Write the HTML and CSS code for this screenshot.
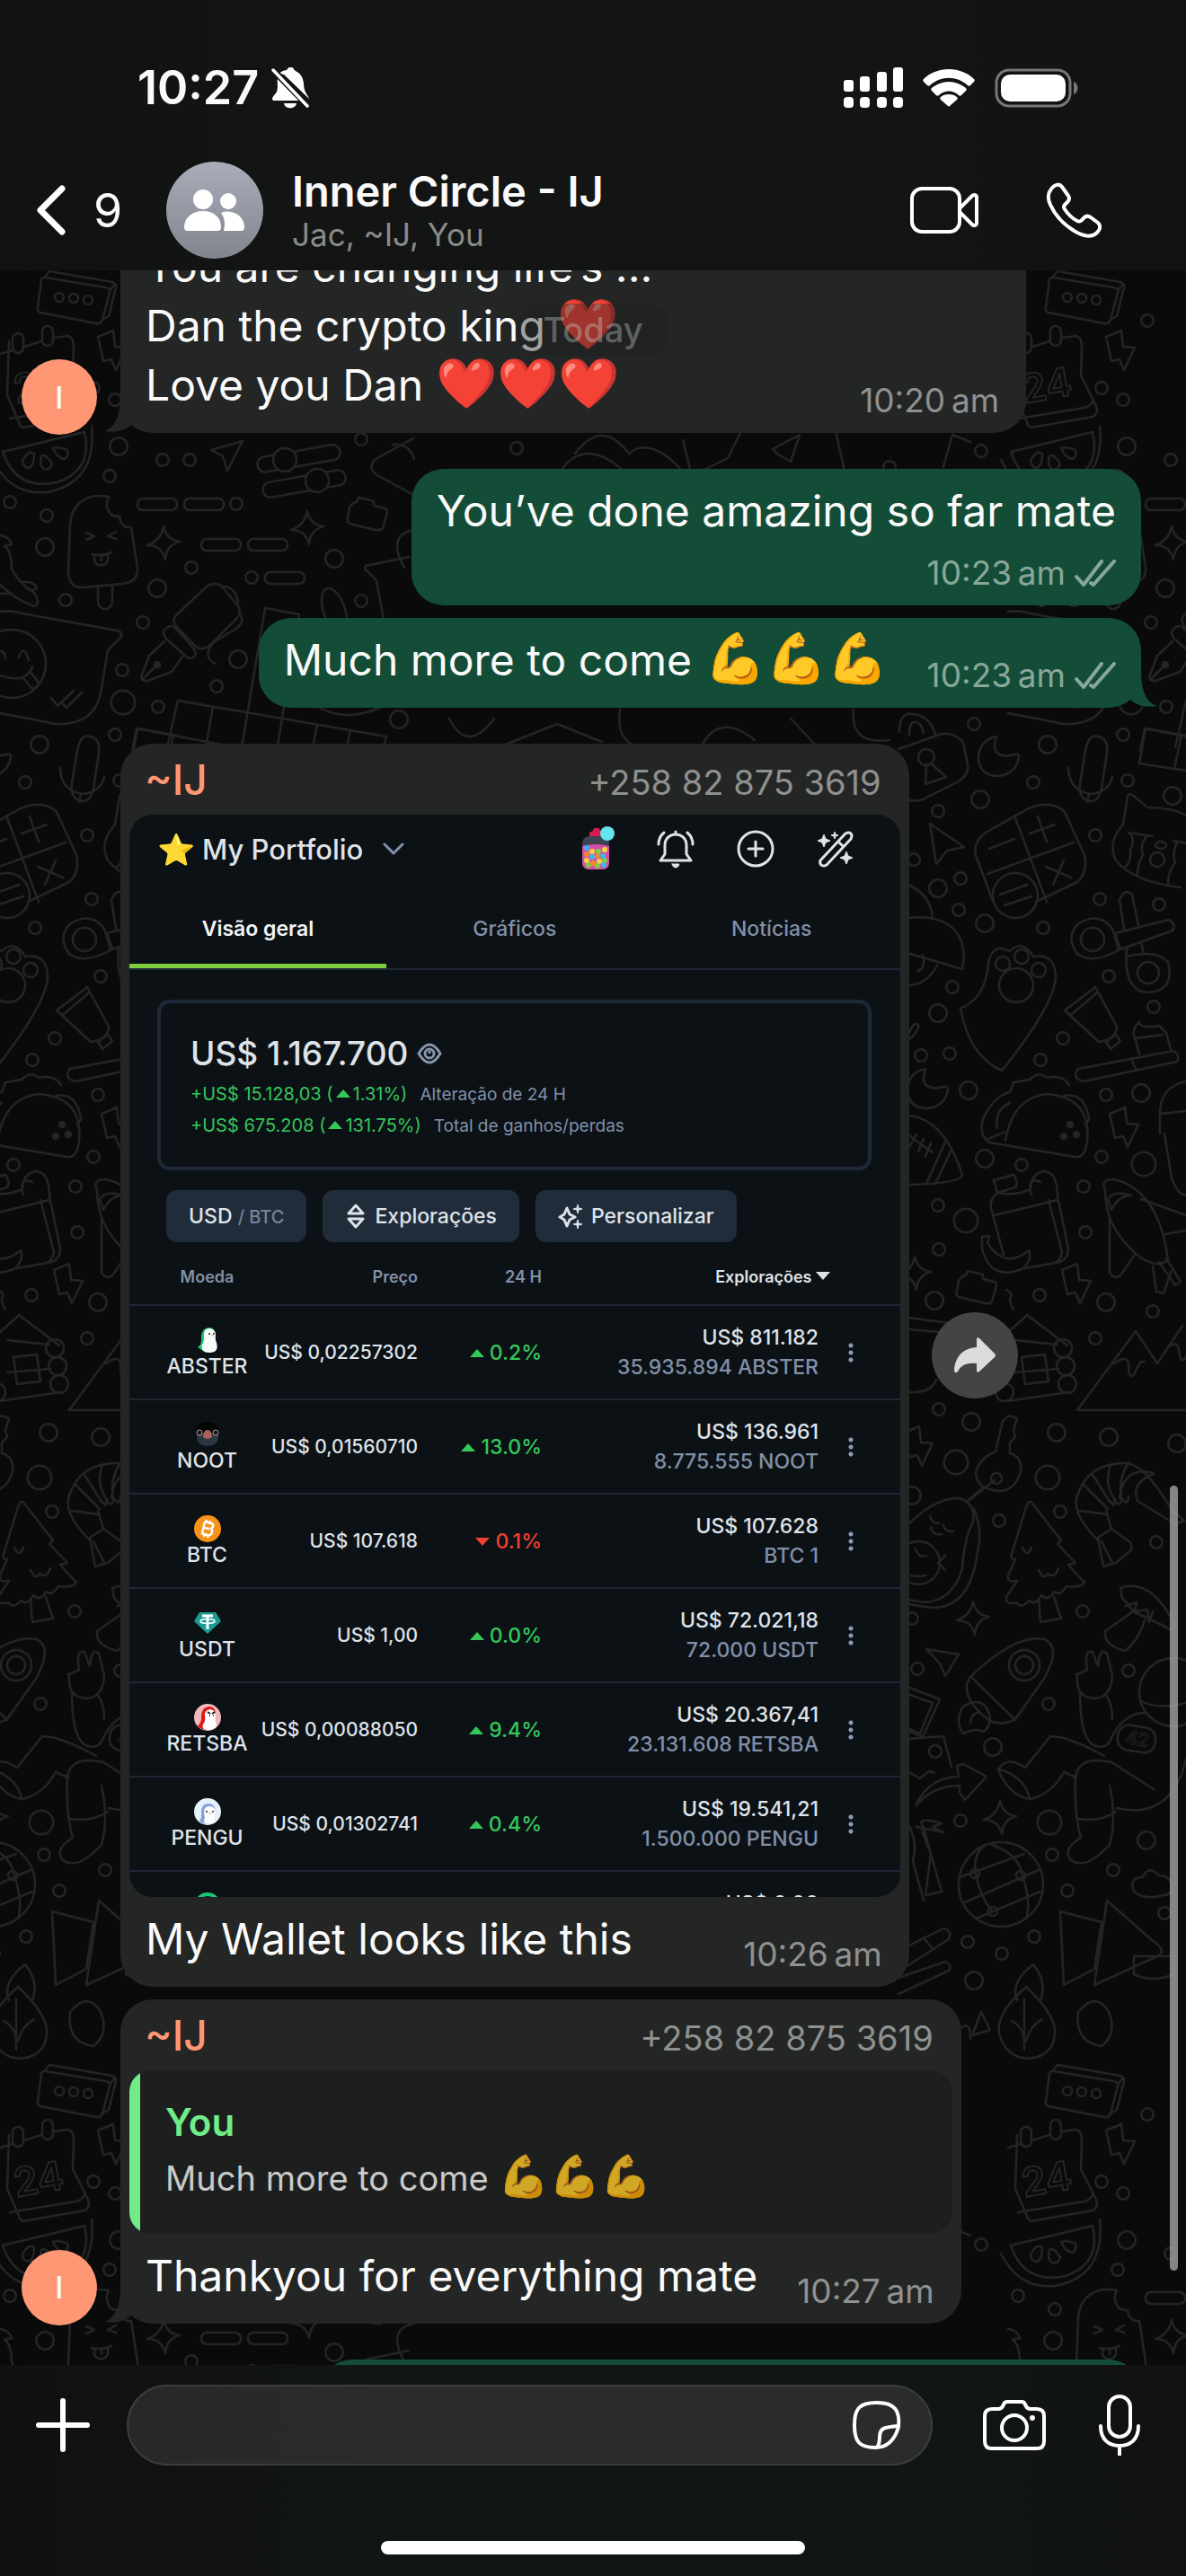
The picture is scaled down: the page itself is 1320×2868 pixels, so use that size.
FILE: index.html
```html
<!doctype html>
<html lang="en">
  <head>
    <meta charset="UTF-8" />
    <meta name="viewport" content="width=device-width, initial-scale=1.0" />
    <title>Inner Circle - IJ</title>
    <link rel="stylesheet" href="styles.css">
  </head>
  <body>
    <header class="top">
      <div class="status">
        <span class="clock">10:27</span>
        <svg class="mute" width="42" height="46" viewBox="0 0 42 46" fill="#fff">
          <path d="M9 7C13 2 17 4 18 2c1-3 6-3 7 0 1 3 10 3 11 16 0 10 5 13 6 17L14 8zM7 12l27 25H2c-3-3 2-6 4-10 2-5 0-10 1-15zM14 40h14c-1 7-13 7-14 0z" />
          <path d="M2 3l38 39" stroke="#131514" stroke-width="7" />
          <path d="M2 3l38 40" stroke="#fff" stroke-width="3.5" stroke-linecap="round" />
        </svg>
        <div class="status-right">
          <svg width="66" height="46" viewBox="0 0 66 46" fill="#fff">
            <rect x="0" y="14" width="11" height="13" rx="3" />
            <rect x="18" y="10" width="11" height="17" rx="3" />
            <rect x="37" y="5" width="11" height="22" rx="3" />
            <rect x="55" y="0" width="11" height="27" rx="3" />
            <rect x="0" y="33" width="11" height="12" rx="4" />
            <rect x="18" y="33" width="11" height="12" rx="4" />
            <rect x="37" y="33" width="11" height="12" rx="4" />
            <rect x="55" y="33" width="11" height="12" rx="4" />
          </svg>
          <svg width="58" height="42" viewBox="0 0 58 42" fill="#fff">
            <path d="M29 0c11 0 21 4 28 11 1 1 1 2 0 3l-4 4c-1 1-2 1-3 0-12-11-30-11-42 0-1 1-2 1-3 0l-4-4c-1-1-1-2 0-3C8 4 18 0 29 0z" />
            <path d="M29 14c7 0 14 3 19 7 1 1 1 2 0 3l-5 5c-1 1-2 1-3 0-6-6-16-6-22 0-1 1-2 1-3 0l-5-5c-1-1-1-2 0-3 5-4 12-7 19-7z" />
            <path d="M29 28c4 0 7 1 9 3 1 1 1 2 0 3l-8 7q-1 1-2 0l-8-7c-1-1-1-2 0-3 2-2 5-3 9-3z" />
          </svg>
          <svg width="93" height="44" viewBox="0 0 93 44">
            <rect x="2" y="2" width="82" height="40" rx="14" fill="none" stroke="#767776" stroke-width="3" />
            <rect x="7" y="7" width="72" height="30" rx="10" fill="#fff" />
            <path d="M88 15c6 2 6 12 0 14z" fill="#767776" />
          </svg>
        </div>
      </div>

      <nav class="bar">
        <a class="back" href="#chats" aria-label="Back, 9 unread">
          <svg width="34" height="58" viewBox="0 0 34 58" fill="none" stroke="#fff" stroke-width="7" stroke-linecap="round" stroke-linejoin="round">
            <path d="M29 5L5 29l24 24" />
          </svg>
          <span>9</span>
        </a>
        <span class="group-pic">
          <svg width="68" height="48" viewBox="0 0 68 48" fill="#fff">
            <circle cx="21" cy="12" r="11" />
            <circle cx="49" cy="14" r="9" />
            <path d="M0 43c0-11 9-18 21-18s20 7 20 18c0 2-1 4-3 4H3c-2 0-3-2-3-4z" />
            <path d="M41 27c12-5 26 3 26 16 0 2-1 4-3 4H44c2-8 1-15-3-20z" />
          </svg>
        </span>
        <div class="group">
          <h1>Inner Circle - IJ</h1>
          <p>Jac, ~IJ, You</p>
        </div>
        <button class="icon" aria-label="Video call">
          <svg width="78" height="54" viewBox="0 0 78 54" fill="none" stroke="#fff" stroke-width="4" stroke-linejoin="round">
            <rect x="3" y="3" width="53" height="48" rx="11" />
            <path d="M56 25l14-14c2-2 5-1 5 2v28c0 3-3 4-5 2L56 29z" />
          </svg>
        </button>
        <button class="icon" aria-label="Voice call">
          <svg width="62" height="62" viewBox="0 0 62 62" fill="none" stroke="#fff" stroke-width="4" stroke-linejoin="round">
            <path d="M5 9c4-7 10-8 13-4l7 10c2 3 1 5-1 7l-3 3c-2 2-1 3 0 5 4 6 8 10 14 13 2 1 3 1 5-1l3-3c2-2 4-2 7 0l8 6c3 3 3 7-1 11-6 6-14 4-22 0C22 49 11 38 5 25c-3-7-3-12 0-16z" />
          </svg>
        </button>
      </nav>
    </header>

    <main class="chat">
      <svg class="wallpaper" width="100%" height="100%" aria-hidden="true">
        <defs>
          <path id="spark" d="M0-19q3 15 18 17-15 4-16 20-4-16-20-16 15-5 18-21z" />
          <path id="bolt" d="M0 0l17-7 2 18 13 1-12 25-5-12-9 2z" />
          <path id="moon" d="M0 0q-20 4-20 25 2 19 22 19 20-2 23-21 0-5-5-3-18 5-22-7 0-8 2-13z" />
          <path id="brick" d="M-15-12q2-5 8-6l2-5 17 4 0 5 12 3q5 2 2 8l-4 14q-2 3-8 2l-29-7q-4-2-2-7z" />
          <path id="dots-s" d="M1084 806h0M1150 871h0M1250 818h0M1255 869h0M1044 903h0M1219 930h0M1017 957h0M1069 978h0M1067 1013h0M1224 1001h0M1290 1007h0M1161 1033h0M1234 1087h0M1060 1099h0M1284 1121h0M1183 1156h0M1158 1180h0M1025 1175h0M1057 1173h0M1231 1219h0M1226 1288h0M1137 1297h0M1206 1321h0M1044 1342h0M1208 1372h0M1045 1391h0M1157 1442h0M1283 1460h0M1219 1490h0M1045 1569h0M1112 1693h0M1180 1683h0M1287 1717h0M1205 1794h0M1015 1802h0M1021 1858h0M1256 1860h0M1167 1897h0M1069 2027h0M1171 2065h0M1239 2082h0M1188 2105h0M1296 2130h0M1077 2162h0M1115 2175h0M1151 2156h0M122 530h0M11 559h0M52 574h0M181 512h0M211 512h0M263 561h0M213 632h0M280 643h0M73 668h0M159 693h0M136 746h0M241 764h0M176 787h0M402 489h0M402 669h0M128 445h0M155 357h0M104 432h0M575 499h0M1092 502h0M990 520h0" />
          <path id="dots-m" d="M1166 829h0M1091 890h0M1305 886h0M1044 989h0M1096 1028h0M1044 1128h0M1078 1214h0M1270 1217h0M1096 1290h0M1040 1448h0M1231 1450h0M1081 1583h0M1176 1595h0M1234 1600h0M1015 1665h0M1310 1607h0M1105 1945h0M1276 2049h0M1084 2205h0M132 497h0M50 609h0M175 655h0M372 622h0M265 734h0M444 801h0" />
          <path id="dots-l" d="M1273 1296h0M1075 1359h0M1064 1628h0M1166 1645h0M1168 2029h0M137 782h0" />
          <g id="doodles" fill="none" stroke="#232424" stroke-width="2.5" stroke-linecap="round" stroke-linejoin="round">
            <!-- bubbles: a wide grey dot with a narrower dark dot on top -->
            <use href="#dots-s" stroke-width="16" />
            <use href="#dots-s" stroke="#0a0a0a" stroke-width="11" />
            <use href="#dots-m" stroke-width="22" />
            <use href="#dots-m" stroke="#0a0a0a" stroke-width="17" />
            <use href="#dots-l" stroke-width="29" />
            <use href="#dots-l" stroke="#0a0a0a" stroke-width="24" />
            <use href="#spark" x="182" y="605" />
            <use href="#spark" x="342" y="588" />
            <use href="#spark" x="1018" y="1418" />
            <use href="#spark" x="1083" y="1802" />
            <use href="#spark" x="1113" y="2024" />
            <use href="#bolt" x="109" y="375" />
            <use href="#bolt" x="1235" y="1240" />
            <use href="#bolt" x="1182" y="1414" />
            <use href="#bolt" x="1006" y="1595" />
            <use href="#moon" x="1109" y="820" />
            <use href="#moon" x="1030" y="1190" />
            <use href="#brick" x="404" y="577" />
            <use href="#brick" x="1082" y="1438" />
            <!-- dice card, calendar, watermelon -->
            <path d="M46 312q1-4 5-3l66 11q6 1 5 6l-8 30q-2 5-7 4l-62-12q-4-1-3-6zM50 308l5-6 70 12q5 2 4 6l-8 32-6 3M122 324l6-8" />
            <circle cx="66" cy="331" r="5" /><circle cx="82" cy="332" r="5" /><circle cx="98" cy="334" r="5" />
            <path d="M0 394l14-4M27 386l19-6M61 376l15-2q6 2 6 12l-1 32 17 34q3 8-4 12l-68 12q-4-1-5-6L8 440l2-60M11 466l74-12q8-2 10-10" />
            <text class="scribble" x="14" y="444" transform="rotate(-10 46 424)">24</text>
            <rect x="14" y="371" width="12" height="22" rx="6" /><rect x="47" y="363" width="12" height="22" rx="6" />
            <path d="M3 503l91-22q10 42-30 56-46 10-61-34zM-8 512q20 40 60 36 56-10 50-74M25 513q6-12 13-8 0 14-6 16-7-1-7-8zM46 508q4-4 12 8-2 8-9 6-6-4-3-14zM59 499q8-2 16 2 2 8-4 10-8-2-12-12z" />
            <!-- paper planes and sliders -->
            <path d="M235 501l35-10-17 33-5-16zM1035 917l38 26-19 4-12 15zM1031 1836l36 6-15 24-6-14z" />
            <rect x="286" y="502" width="93" height="17" rx="8" transform="rotate(-10 332 510)" />
            <rect x="292" y="530" width="93" height="17" rx="8" transform="rotate(-10 339 538)" />
            <circle cx="317" cy="512" r="13" fill="#0a0a0a" /><circle cx="353" cy="535" r="13" fill="#0a0a0a" />
            <rect x="153" y="555" width="44" height="13" rx="6" /><rect x="205" y="555" width="44" height="13" rx="6" />
            <rect x="224" y="600" width="44" height="13" rx="6" /><rect x="276" y="600" width="44" height="13" rx="6" />
            <rect x="295" y="637" width="44" height="13" rx="6" />
            <!-- ice lolly -->
            <path d="M121 553c-25-5-42 8-43 32l-2 50c0 14 6 20 18 19l42-4c12-1 18-8 17-18l-7-45c-8 1-12-4-13-12-13 1-17-12-12-22zM109 652v18a8 8 0 0 0 16 0v-19M96 593l9 4-9 4M129 592l-9 5 9 3M102 617q11 3 22-2M105 618v6a8 8 0 0 0 15 0v-6M113 619v5" />
            <path d="M0 596q10 1 13 10l-8 2q8 6 8 25 6 14 26 28 6 12-1 14-22-8-38-24M24 648q14-2 17 7-7 5-12-1M0 661h10" />
            <!-- smiley message -->
            <path d="M0 681q12-2 25 2l105 19q8 2 4 8l-14 14-8 48q-8 36-50 34L0 794M57 777l7 9 18-17M70 784l4 4 17-17M0 725q6 0 6 8M21 732q5-16 11 3M0 752q30 10 36-10M26 755l10 12q8-2 6-8l-8-11" />
            <circle cx="13" cy="739" r="38" />
            <path d="M81 866l5-30q4-20 14-16 12 2 10 18l-6 40q-4 16-14 14-14-4-9-26zM67 854q0 26 25 30 20-2 24-19M90 884l-2 9" />
            <!-- fountain pen -->
            <path d="M196 685l34-32q8-6 16-1l18 21q6 8-1 16l-30 30q-8 6-15 1l-22-23q-5-6 0-12zM187 698q-8 4-3 12l22 20q6 6 11 0 2-4-3-10l-20-22q-4-2-7 0zM183 714l-17 16-9 24q0 4 7 4l27-10 12-17M158 757l16-16M247 653q16 0 18 18M268 685q4 8-4 14l-26 16q-14 16 2 24" />
            <circle cx="175" cy="740" r="3" fill="#232424" />
            <ellipse cx="372" cy="680" rx="12" ry="26" transform="rotate(-18 372 680)" />
            <path d="M455 620l-48 10q-2 4 2 6l10 10 8 44M460 590q-30 6-10 42M460 488l-40 22q-12 8-2 18l44 24M437 495q18-2 24 16M356 788q30 16 66 0" />
            <!-- crossword -->
            <path d="M295 677l38 7M295 677l-26 155M333 684l-24 146M198 780l232 40-3 12M198 780l-12 52M237 787l-8 45M152 811l105 20M152 811l-5 25M353 807l-5 25M390 813l-4 20" />
            <path d="M620 530q30-50 80 0M640 505q30-40 60 0 24-20 60 20M760 490l10 40 40-20 20-40M860 500l30-16-10 30-14-8zM930 480l10 44M1050 520l10-36 20 8M500 800q20 40 50 0M560 830l60-24 50 20M690 790q-6 40 30 44M780 832q20-40 60-8M880 800l30 32M950 790q-4 40 40 34" />
            <!-- padlock -->
            <path d="M1000 834l48-17q15-2 24 10l5 24q2 12-12 20l-38 19q-14 4-27-2M1001 815q0-22 14-20 18 0 26 22M1012 818q0-16 8-14 6 2 8 12M1031 851l-1 22 23-8-17-15" />
            <circle cx="1031" cy="843" r="9" />
            <!-- calculator tile -->
            <path d="M1105 1003l-18-48q-6-16 10-28l48-27q26-10 40 4l22 48q4 20-8 30l-46 22M1129 908l36 96M1099 973l96-35M1101 945l28-11M1146 928l28-10M1155 909l10 28M1164 965l28 12M1184 958l-12 27M1113 996l30-11M1118 1008l30-10" />
            <circle cx="1130" cy="997" r="25" />
            <!-- striped cat -->
            <path d="M1250 918l5-32q2-4 8 1l14 12q30 0 45 10M1250 918q-18 20-8 40 20 24 72 30M1256 927l27 4M1258 928q6 10 0 18 2 12-6 20M1276 932q-8 8-4 20-6 10-6 22M1306 936l20 4M1310 938q-6 12-2 22-8 10-8 24M1275 811l45 8M1268 850l52 8M1275 811l-7 39M1315 818l-8 38" />
            <circle cx="1288" cy="957" r="8" /><ellipse cx="1292" cy="941" rx="6" ry="4" />
            <!-- paw, scissors, toothpaste -->
            <path d="M1069 1123q28-12 31-50 4-24 24-14 14-14 26 6 26-4 25 26-6 34-60 101-36-16-46-69z" />
            <circle cx="1116" cy="1073" r="8" /><circle cx="1137" cy="1065" r="8" /><circle cx="1156" cy="1080" r="8" /><circle cx="1131" cy="1097" r="19" />
            <circle cx="1216" cy="1046" r="13" /><circle cx="1278" cy="1083" r="12" />
            <path d="M1245 1058q-30 16-46 4-14-20 2-34 24-14 38 8zM1241 1039l60-15q8 4 4 12l-58 21zM1251 1034l-5-32q6-14 14-6l7 34M1254 1056q-4 48 24 49 30-2 22-34-14-14-46-6zM1270 1049l3 13M1185 1125l34-26 24 44q0 14-20 17zM1192 1130l29-25M1231 1160l11-8 5 7-11 9zM1200 1190l106-20q8 4 4 12l-104 22q-14-4-6-14zM1260 1181l4 9M1268 1174l-4-16q-6-12 4-20 2 8 22 4l8 8 5 18M1264 1156l30-4" />
            <!-- clam, football, taco -->
            <path d="M1010 985q26 10 28 38M1010 1022q60-6 63 43l-2 14-61-18M1043 1075q-12 22-33 22M1021 1081q10-2 6-18M1010 1157q6-22 12-16 2 6-12 18" />
            <path d="M1010 1242q40 2 61 66-2 10-61 11M1031 1318l22-49M1041 1318l18-38M1010 1263l28 20M1020 1263l-8 14M1028 1268l-6 14M1036 1273l-6 14" />
            <path d="M1119 1270q8-48 46-52 50 4 45 52-2 20-14 18l-95-16q-12-8-7-26 12-26 30-30l4-11q12-2 18-3 10-10 20-2 16-4 24 8M1184 1220q24-4 28 26l-4 6M1110 1256q-4-20 14-28M1100 1268q10-4 18-8" />
            <circle cx="1191" cy="1252" r="3" fill="#232424" /><circle cx="1198" cy="1263" r="3" fill="#232424" /><circle cx="1184" cy="1265" r="3" fill="#232424" />
            <!-- backpack and banana -->
            <path d="M1117 1397l-14-52q-2-10 8-17 18 4 36-4 0-18 16-20 14 2 14 28l12 58q0 14-14 16l-34 6M1107 1353l70-17M1167 1336l15 58q-2 10-8 12M1106 1314l22-6q6 8 2 14l-20 6zM1148 1330q-6-20 10-14M1093 1377l8-1-2 8q20 30 46 8 4 10-6 20-36 16-46-22z" />
            <!-- shuttle -->
            <path d="M1230 1325q-6-12 10-12 50 12 60 90-20 14-50-22-20-24-20-56zM1233 1335q6-10 26-4-14 0-22 16zM1235 1355v62q6 8 12 3l16-23M1270 1335l50 18M1297 1374l23-4M1283 1410l4 28 8 2 8-24M1290 1405l18 26 6-4-16-26M1291 1240l29-3M1291 1262v-22q0-30 29-36M1296 1262l8 50q8 20 16 18M1120 1436q8 4 4 10 0 6 4 12" />
            <!-- cabin and mountains -->
            <path d="M1010 1467l62 8M1010 1480l60 5M1010 1550q26 2 32-14M1117 1488l26-24 45 34M1137 1511l26-3 4 30-26 3zM1130 1492l46 5M1130 1528l48-4M1120 1560l70-10M1199 1570l65-88 24 36 28-42M1199 1570h121M1240 1518q14-10 16 0 0 20 6 12 6-12 8-14l4 0M1300 1500q10-8 12 2 2 20 8 8" />
            <circle cx="1183" cy="1501" r="10" /><circle cx="1186" cy="1521" r="10" /><circle cx="1188" cy="1541" r="10" /><circle cx="1118" cy="1550" r="10" />
            <!-- key and avocado -->
            <path d="M1108 1616l8-34q8-10 16-2l-4 12 2 8-6 6 0 12q14 4 12 20-6 22-24 22-26-2-26-22 6-16 22-22zM1107 1648l-28 22M1094 1656l-18 16" />
            <circle cx="1109" cy="1646" r="6" />
            <path d="M1010 1698q30-30 56-30 20 4 17 26-10 20-12 52-10 36-42 38l-19-3M1084 1680q10 24 4 48-8 62-50 62l-28-4M1035 1688q2 8 10 8M1036 1700q2 10 12 8M1050 1698q2 8 11 7M1052 1732l-8 8 8 8M1019 1724q4 12 12 8M1014 1754q8 2 16 0" />
            <circle cx="1022" cy="1740" r="24" />
            <!-- tree -->
            <path d="M1149 1674l32 41-4 4 20 21-8 2 18 20q-4 6-20 4-8 12-14 6-6 12-14 4-6 12-14 6-8 10-14 2-12 4-11-6l12-18q-12 2-10-6l8-18q-6 0-4-6l16-52q4-10 7-4zM1156 1780l2 26 23-4-8-24M1138 1723q6 12 10 0M1156 1748q6 12 10 4 8 6 12-6" />
            <!-- shrimp and mushroom -->
            <path d="M1222 1715q-30-30-23-50 12-36 53-36 22 0 52 52l14 12-10 4-42-26q-8-20 18-30M1222 1712l15-10-6-20M1202 1682l30 4M1205 1652l28 28M1215 1640l20 32M1236 1631q-8 22 6 40M1256 1628q-12 20-8 40M1284 1640q-34-8-38 28M1222 1712l6 32 14-4 17-14 0-8-22-16M1226 1716l12 24M1236 1672q6 8 4-2 8 10 8-2 8 10 8-2" />
            <path d="M1247 1768q34-12 60 40-4 10-10 3l-34-16-14-16zM1264 1792l-34 24q-2 16 22 22 14-10 22-34M1253 1788l12-4-2 10 14-2 2 14 4-12" />
            <!-- rocket -->
            <path d="M1080 1867q50-48 82-42 20 8 0 44l-32 45q-14 8-28 2-28-20-26-41zM1082 1868l48 47M1072 1930q-10-14 0-30 24-14 30 12-2 20-14 14-8 0-16 4zM1080 1918q0-10 10-12" />
            <circle cx="1140" cy="1854" r="17" /><circle cx="1140" cy="1854" r="10" />
            <!-- astronaut -->
            <circle cx="1306" cy="1884" r="38" />
            <path d="M1202 1885q0 70 30 58l4-6q14-30 38-30M1270 1894q20 10 50 2M1199 1865q-2 26 20 26 18-2 19-26l-6-24q-8-8-10 14l-6-16q-10-2-6 20l-8 4q-6 0-3 2zM1230 1886q8 10 8 28M1229 1955q-40-22-60-22l-28 35q-20-14-30 2 12 30 36 33 24-6 37-30l14 6M1146 2002q-6-24-34-32M1197 1978q4-24 40-16l47 30M1197 1978q-2 40 6 68-20 12-12 24 16 14 44-16 8-30 0-66M1200 2025q24 4 42-8M1243 2013q60 14 77-54" />
            <rect x="1244" y="1922" width="42" height="28" rx="12" transform="rotate(10 1265 1936)" />
            <text class="scribble tiny" x="1253" y="1943" transform="rotate(10 1265 1936)">42</text>
            <!-- forward arrow, bamboo, photo -->
            <path d="M1020 2008q16-30 47-30l-2-12 7-2 26 14-24 26-6-8v-8q-30 0-48 22zM1010 1878l36 14-19 42-17-8M1010 1886l28 10-14 34-14-6M1010 1936l40-3 9 34M1010 1972l14 8 10-8 6 2M1010 2030q12 20 6 42l12 44M1026 2038l10 26-6 46 18-4-12-42-8-30q-10-12 20-4l-10 4 12 6-30-6" />
            <circle cx="1041" cy="1950" r="7" />
            <!-- globe -->
            <circle cx="1114" cy="2098" r="47" />
            <path d="M1068 2090l72-26M1074 2118l82-36M1086 2136l72-30M1086 2086q-4-20 10-32M1086 2086q4 24 18 42M1104 2054q30 10 34 34 10 30 4 48" />
            <circle cx="1085" cy="2086" r="5" /><circle cx="1136" cy="2088" r="5" /><circle cx="1105" cy="2128" r="5" />
            <!-- books, cake, cloud, flame -->
            <path d="M1180 2128l46 12-8 52-34 18-4-82M1232 2116l50 44q18 12 6 18l-70 32 14-94M1262 2178h44v20q-22 10-44 0zM1262 2106q-6-16 10-16 6-14 18-2 14 0 14 14 0 8-10 8-20 6-32-4zM1150 2187q16 20 8 40M1150 2187q-26 20-18 40M1000 2172l50-25q10 2 6 12l-56 36M1000 2202l52-18q8 4 4 10l-56 26M1030 2160l8 10" />
            <!-- pear and leaves -->
            <path d="M1142 2212q-34 30-30 52 8 28 34 28 30-4 28-34-4-20-32-46zM1140 2226v56M1126 2250q12 6 14 20M1160 2248q-14 8-18 24M1200 2240q20-24 34 0 10 24-8 38-30-4-26-38zM1092 2240l10 20-20 6zM1060 2270q20-30 20 0" />
          </g>
          <pattern id="tile" width="1122" height="1997" patternUnits="userSpaceOnUse">
            <g transform="translate(0 -301)">
              <use href="#doodles" />
              <use href="#doodles" x="-1122" />
              <use href="#doodles" x="1122" />
            </g>
          </pattern>
        </defs>
        <rect width="100%" height="100%" fill="url(#tile)" />
      </svg>

      <div class="messages">
        <div class="row tight-end">
          <span class="avatar">I</span>
          <article class="bubble in long">
            <div class="body">
              <p class="text">You are changing life’s ...<br>Dan the crypto king <span class="emoji">❤️</span><br>Love you Dan <span class="emoji">❤️❤️❤️</span></p>
              <span class="meta">10:20&thinsp;am</span>
            </div>
            <svg class="tail" width="32" height="42" viewBox="0 0 32 42"><path d="M18 0c0 24-6 36-18 40 12 2 24 0 32-9V0z" /></svg>
          </article>
        </div>

        <div class="row mine">
          <article class="bubble out">
            <div class="body stacked">
              <p class="text">You’ve done amazing so far mate</p>
              <span class="meta">10:23&thinsp;am
                <svg width="46" height="30" viewBox="0 0 46 30" fill="none" stroke="#89a69b" stroke-width="4" stroke-linecap="round" stroke-linejoin="round"><path d="M2 19l8 9L30 2M18 26l3 2L44 2" /></svg>
              </span>
            </div>
          </article>
        </div>
        <div class="row mine tight-end">
          <article class="bubble out">
            <div class="body">
              <p class="text">Much more to come <span class="emoji">💪💪💪</span></p>
              <span class="meta">10:23&thinsp;am
                <svg width="46" height="30" viewBox="0 0 46 30" fill="none" stroke="#89a69b" stroke-width="4" stroke-linecap="round" stroke-linejoin="round"><path d="M2 19l8 9L30 2M18 26l3 2L44 2" /></svg>
              </span>
            </div>
            <svg class="tail" width="32" height="42" viewBox="0 0 32 42"><path d="M14 0c0 24 6 36 18 40C20 42 8 40 0 31V0z" /></svg>
          </article>
        </div>

        <div class="row">
          <article class="bubble in photo">
            <div class="sender"><strong>~IJ</strong><span>+258 82 875 3619</span></div>
            <section class="wallet" lang="pt">
              <div class="wallet-top">
                <button class="portfolio"><span class="star">⭐</span>My Portfolio
                  <svg width="24" height="14" viewBox="0 0 24 14" fill="none" stroke="#7f92ad" stroke-width="3" stroke-linecap="round" stroke-linejoin="round"><path d="M2 2l10 10L22 2" /></svg>
                </button>
                <button class="tool" aria-label="Candy">
                  <svg width="44" height="50" viewBox="0 0 44 50">
                    <path d="M15 7l4-2 1-3h6l1 3 4 2v5H15z" fill="#d81b4c" />
                    <rect x="7" y="11" width="30" height="37" rx="8" fill="#3a4450" />
                    <path d="M7 22q15-4 30 0v18q0 8-8 8H15q-8 0-8-8z" fill="#d94fa6" />
                    <g stroke-width="6" stroke-linecap="round">
                      <path stroke="#3fb5f0" d="M12 24h0M30 33h0M18 34h0M31 43h0" />
                      <path stroke="#f6d743" d="M18 28h0M26 39h0M12 38h0M32 26h0" />
                      <path stroke="#7bd04b" d="M25 28h0M14 43h0M24 44h0M32 38h0" />
                      <path stroke="#f08a2c" d="M12 31h0M24 33h0M19 41h0" />
                    </g>
                    <circle cx="35" cy="8" r="8" fill="#63e6ee" />
                  </svg>
                </button>
                <button class="tool" aria-label="Alerts">
                  <svg width="44" height="44" viewBox="0 0 44 44" fill="none" stroke="#dfe3e8" stroke-width="3" stroke-linecap="round" stroke-linejoin="round"><path d="M5 35h34l-5-7V18c0-7-5-12-12-12s-12 5-12 12v10zM22 3v3M3 17q0-8 6-13M41 17q0-8-6-13" /><path d="M18 39h8q-1 4-4 4t-4-4z" fill="#dfe3e8" stroke-width="1" /></svg>
                </button>
                <button class="tool" aria-label="Add coin">
                  <svg width="44" height="44" viewBox="0 0 44 44" fill="none" stroke="#dfe3e8" stroke-width="3" stroke-linecap="round"><circle cx="22" cy="22" r="19" /><path d="M22 14v16M14 22h16" /></svg>
                </button>
                <button class="tool" aria-label="Customise">
                  <svg width="44" height="44" viewBox="0 0 44 44" fill="none" stroke="#dfe3e8" stroke-width="3" stroke-linejoin="round"><path d="M5 35L33 5q4-2 6 0t0 6L12 40q-4 2-6 0t-1-5zM25 14l6 6" /><path d="M9 6l2 5 5 2-5 2-2 5-2-5-5-2 5-2zM21 3l1 3 3 1-3 1-1 3-1-3-3-1 3-1zM34 25l2 5 5 2-5 2-2 5-2-5-5-2 5-2z" fill="#dfe3e8" stroke-width="1" /></svg>
                </button>
              </div>
              <div class="tabs">
                <button class="tab active">Visão geral</button>
                <button class="tab">Gráficos</button>
                <button class="tab">Notícias</button>
              </div>
              <div class="total">
                <p class="amount">US$ 1.167.700
                  <svg width="28" height="24" viewBox="0 0 28 24" fill="none" stroke="#8795ab" stroke-width="3"><path d="M2 12Q8 2 14 2t12 10q-6 10-12 10T2 12z" /><circle cx="14" cy="12" r="5" /><path d="M14 9v3" /></svg>
                </p>
                <p class="change"><span class="up">+US$ 15.128,03 (<i class="tri"></i>1.31%)</span>Alteração de 24 H</p>
                <p class="change"><span class="up">+US$ 675.208 (<i class="tri"></i>131.75%)</span>Total de ganhos/perdas</p>
              </div>
              <div class="filters">
                <button class="chip"><span>USD <small>/ BTC</small></span></button>
                <button class="chip">
                  <svg width="24" height="28" viewBox="0 0 24 28" fill="none" stroke="#dfe3e8" stroke-width="3" stroke-linejoin="round"><path d="M4 11l8-9 8 9zM4 17l8 9 8-9z" /></svg>
                  Explorações
                </button>
                <button class="chip">
                  <svg width="28" height="28" viewBox="0 0 28 28" fill="none" stroke="#dfe3e8" stroke-width="3" stroke-linejoin="round"><path d="M10 5l3 7 6 3-6 3-3 7-3-7-5-3 5-3z" /><path d="M22 1l1 4 4 1-4 1-1 4-1-4-4-1 4-1zM22 18l1 4 4 1-4 1-1 4-1-4-4-1 4-1z" fill="#dfe3e8" stroke-width="1" /></svg>
                  Personalizar
                </button>
              </div>
              <table>
                <thead>
                  <tr><th class="coin">Moeda</th><th class="price">Preço</th><th class="pct">24 H</th><th class="hold sorted">Explorações <i class="tri down"></i></th><th class="more"></th></tr>
                </thead>
                <tbody>
                  <tr>
                    <td class="coin"><svg width="30" height="30" viewBox="0 0 30 30"><path d="M4 23q5-3 4-12Q9 1 17 1q6 0 7 8l-2 12 4 2-6 4H10z" fill="#1fc46e" /><path d="M11 11q-1-8 5-9 8 0 8 8-1 3 1 8 3 11-8 11-10 0-8-9 3-5 2-9z" fill="#f7fbfa" /><circle cx="17" cy="8" r="1" /><circle cx="22" cy="8" r="1" /><path d="M19 9h3l-2 2z" fill="#e3a19c" /></svg>ABSTER</td>
                    <td class="price">US$ 0,02257302</td><td class="pct up"><i class="tri"></i>0.2%</td><td class="hold">US$ 811.182<span>35.935.894 ABSTER</span></td>
                    <td class="more"><button aria-label="ABSTER options"></button></td>
                  </tr>
                  <tr>
                    <td class="coin"><svg width="30" height="30" viewBox="0 0 30 30"><path d="M2 15Q2 1 15 1t13 14z" fill="#050505" /><path d="M3 14h24q2 13-12 14Q2 28 3 14z" fill="#2b3642" /><path d="M10 18q0-8 5-8t5 8q-5 4-10 0z" fill="#a86152" /><circle cx="6" cy="13" r="3" fill="#111" stroke="#aaa" /><circle cx="24" cy="13" r="3" fill="#111" stroke="#aaa" /></svg>NOOT</td>
                    <td class="price">US$ 0,01560710</td><td class="pct up"><i class="tri"></i>13.0%</td><td class="hold">US$ 136.961<span>8.775.555 NOOT</span></td>
                    <td class="more"><button aria-label="NOOT options"></button></td>
                  </tr>
                  <tr>
                    <td class="coin"><svg width="30" height="30" viewBox="0 0 30 30"><circle cx="15" cy="15" r="15" fill="#f7931a" /><path d="M12 7l7 2q3 1 2 4-1 2-3 2 3 1 2 4-1 4-5 3l-7-2M12 7L9 20M11 14l6 1M14 5l-1 4M18 6l-1 4M12 20l-1 4M16 21l-1 4" fill="none" stroke="#fff" stroke-width="2.4" /></svg>BTC</td>
                    <td class="price">US$ 107.618</td><td class="pct fall"><i class="tri down"></i>0.1%</td><td class="hold">US$ 107.628<span>BTC 1</span></td>
                    <td class="more"><button aria-label="BTC options"></button></td>
                  </tr>
                  <tr>
                    <td class="coin"><svg width="30" height="30" viewBox="0 0 30 30"><path d="M6 3h18l6 10-15 14L0 13z" fill="#1a9c93" /><path d="M9 7h12M15 7v15" stroke="#fff" stroke-width="3" /><ellipse cx="15" cy="13" rx="8" ry="2.5" fill="none" stroke="#fff" stroke-width="1.5" /></svg>USDT</td>
                    <td class="price">US$ 1,00</td><td class="pct up"><i class="tri"></i>0.0%</td><td class="hold">US$ 72.021,18<span>72.000 USDT</span></td>
                    <td class="more"><button aria-label="USDT options"></button></td>
                  </tr>
                  <tr>
                    <td class="coin"><svg width="30" height="30" viewBox="0 0 30 30"><circle cx="15" cy="15" r="15" fill="#f3b9b9" /><path d="M4 25q5-5 4-12Q9 3 17 3q6 0 7 7l-6 18q-9 2-14-3z" fill="#e01717" /><path d="M12 14q-1-7 6-8 6 1 6 7-1 3 0 7 2 5-1 7-5 4-12 1-3-3 0-7 2-3 1-7z" fill="#fff" /><path d="M15 9l3 2M23 9l-3 2M17 13h1M21 13h1" stroke="#111" stroke-width="1.6" /></svg>RETSBA</td>
                    <td class="price">US$ 0,00088050</td><td class="pct up"><i class="tri"></i>9.4%</td><td class="hold">US$ 20.367,41<span>23.131.608 RETSBA</span></td>
                    <td class="more"><button aria-label="RETSBA options"></button></td>
                  </tr>
                  <tr>
                    <td class="coin"><svg width="30" height="30" viewBox="0 0 30 30"><circle cx="15" cy="15" r="15" fill="#e6f1fb" /><path d="M6 26q3-5 2-12Q9 6 16 6q7 0 8 8l-4 14q-9 2-14-2z" fill="#86a0dc" /><path d="M11 16q0-7 6-7 7 0 7 7-2 4-1 11-6 3-11 1-2-3 0-6z" fill="#fbfdff" /><circle cx="14" cy="15" r="1" /><circle cx="21" cy="15" r="1" /><path d="M16 16h3l-1 2z" fill="#e6b45a" /></svg>PENGU</td>
                    <td class="price">US$ 0,01302741</td><td class="pct up"><i class="tri"></i>0.4%</td><td class="hold">US$ 19.541,21<span>1.500.000 PENGU</span></td>
                    <td class="more"><button aria-label="PENGU options"></button></td>
                  </tr>
                  <tr>
                    <td class="coin"><svg width="30" height="30" viewBox="0 0 30 30"><circle cx="15" cy="15" r="13" fill="#12241d" stroke="#1fc46e" stroke-width="4" /></svg>&nbsp;</td>
                    <td class="price"></td><td class="pct"></td><td class="hold">US$ 0,00<span>&nbsp;</span></td><td class="more"></td>
                  </tr>
                </tbody>
              </table>
            </section>
            <div class="body">
              <p class="text">My Wallet looks like this</p>
              <span class="meta">10:26&thinsp;am</span>
            </div>
          </article>
          <button class="forward" aria-label="Forward">
            <svg width="46" height="40" viewBox="0 0 46 40" fill="#dcdcdc"><path d="M25 2q0-3 3-1l17 17q2 2 0 4L28 38q-3 2-3-1v-8C13 28 8 31 4 38q-3 3-4-1C1 22 9 12 25 11z" /></svg>
          </button>
        </div>

        <div class="row tight-end">
          <span class="avatar">I</span>
          <article class="bubble in">
            <div class="sender"><strong>~IJ</strong><span>+258 82 875 3619</span></div>
            <blockquote class="quote">
              <cite>You</cite>
              <p>Much more to come <span class="emoji small">💪💪💪</span></p>
            </blockquote>
            <div class="body">
              <p class="text">Thankyou for everything mate</p>
              <span class="meta">10:27&thinsp;am</span>
            </div>
            <svg class="tail" width="32" height="42" viewBox="0 0 32 42"><path d="M18 0c0 24-6 36-18 40 12 2 24 0 32-9V0z" /></svg>
          </article>
        </div>

        <div class="row mine">
          <div class="bubble out next"></div>
        </div>
      </div>

      <span class="day">Today</span>
      <span class="scrollbar"></span>
    </main>

    <footer class="compose">
      <div class="compose-row">
        <button class="icon" aria-label="Attach">
          <svg width="60" height="60" viewBox="0 0 60 60" stroke="#fff" stroke-width="6" stroke-linecap="round"><path d="M30 3v54M3 30h54" /></svg>
        </button>
        <div class="field">
          <input type="text" aria-label="Message" />
          <button class="icon sticker" aria-label="Stickers">
            <svg width="56" height="56" viewBox="0 0 56 56" fill="none" stroke="#fff" stroke-width="4" stroke-linejoin="round"><path d="M52 30C54 12 48 3 28 3S3 10 3 28s5 25 23 25c14 0 22-9 26-23z" /><path d="M52 29c-15 1-21 2-21 12q0 8-3 12" /></svg>
          </button>
        </div>
        <button class="icon" aria-label="Camera">
          <svg width="70" height="56" viewBox="0 0 70 56" fill="none" stroke="#fff" stroke-width="4" stroke-linejoin="round"><path d="M10 10h7c3 0 4-1 5-3l1-2q1-3 4-3h16q3 0 4 3l1 2c1 2 2 3 5 3h7q8 0 8 8v28q0 8-8 8H10q-8 0-8-8V18q0-8 8-8z" /><circle cx="35" cy="31" r="14" /><circle cx="55" cy="20" r="3" fill="#fff" stroke="none" /></svg>
        </button>
        <button class="icon" aria-label="Voice message">
          <svg width="48" height="68" viewBox="0 0 48 68" fill="none" stroke="#fff" stroke-width="4" stroke-linecap="round"><rect x="12" y="2" width="24" height="45" rx="12" /><path d="M3 35c0 15 9 22 21 22s21-7 21-22M24 57v10" /></svg>
        </button>
      </div>
      <div class="home"></div>
    </footer>
  </body>
</html>
```

FILE: styles.css
```css
* {
  box-sizing: border-box;
}
body {
  margin: 0;
  height: 100vh;
  display: flex;
  flex-direction: column;
  overflow: hidden;
  background: #0a0a0a;
  color: #fafafa;
  font-family: Inter, "Noto Sans", sans-serif;
}
h1,
p,
blockquote {
  margin: 0;
}
button {
  font: inherit;
  color: inherit;
  background: none;
  border: none;
  padding: 0;
  cursor: pointer;
}
svg {
  display: block;
  flex: none;
}

/* header */
.top {
  flex: none;
  height: 301px;
  padding-top: 68px;
  background: linear-gradient(90deg, #101111, #131514 25%, #131514 75%, #101111);
}
.status {
  display: flex;
  align-items: center;
  height: 60px;
  padding: 0 120px 0 153px;
}
.clock {
  font-size: 52px;
  font-weight: 600;
  line-height: 60px;
}
.mute {
  margin-left: 14px;
}
.status-right {
  display: flex;
  align-items: center;
  gap: 22px;
  margin-left: auto;
}
.bar {
  display: flex;
  align-items: center;
  height: 108px;
  margin-top: 52px;
  padding: 0 94px 0 40px;
}
.back {
  display: flex;
  align-items: center;
  gap: 30px;
  width: 145px;
  color: inherit;
  font-size: 52px;
  text-decoration: none;
}
.group-pic {
  display: grid;
  place-items: center;
  width: 108px;
  height: 108px;
  border-radius: 50%;
  background: linear-gradient(#a9adb9, #81858e);
}
.group {
  flex: 1;
  padding: 2px 0 0 32px;
}
.group h1 {
  font-size: 47px;
  font-weight: 600;
  line-height: 52px;
}
.group p {
  color: #8a8b8a;
  font-size: 35px;
  line-height: 44px;
}
.bar .icon {
  margin-left: 74px;
}

/* conversation */
.chat {
  position: relative;
  flex: 1;
  min-height: 0;
  overflow: hidden;
}
.wallpaper {
  position: absolute;
  inset: 0;
}
.scribble {
  font: 600 44px Inter, sans-serif;
  stroke-width: 2px;
}
.scribble.tiny {
  font-size: 20px;
  stroke-width: 1px;
}
.messages {
  position: relative;
  display: flex;
  flex-direction: column;
  gap: 14px;
  margin-top: -51px;
}
.row {
  display: flex;
  align-items: flex-end;
  padding-left: 134px;
}
.row.mine {
  justify-content: flex-end;
  padding: 0 50px 0 0;
}
.tight-end {
  margin-bottom: 26px;
}
.avatar {
  display: grid;
  place-items: center;
  width: 84px;
  height: 84px;
  margin: 0 26px -2px -110px;
  border-radius: 50%;
  background: #ff9775;
  font-size: 34px;
  font-weight: 500;
}
.bubble {
  position: relative;
  padding: 0 10px;
  border-radius: 36px;
}
.in {
  background: #242625;
  fill: #242625;
}
.out {
  background: #144d37;
  fill: #144d37;
}
.long {
  width: 85%;
}
.photo {
  width: 74%;
}
.tail {
  position: absolute;
  bottom: 0;
}
.in .tail {
  left: -18px;
}
.out .tail {
  right: -18px;
}
.body {
  display: flex;
  align-items: flex-end;
  justify-content: space-between;
  gap: 44px;
  padding: 14px 20px 14px 18px;
}
.out .body {
  padding: 14px 18px;
}
.body.stacked {
  flex-direction: column;
  gap: 14px;
}
.text {
  padding-bottom: 6px;
  font-size: 48px;
  line-height: 66px;
}
.stacked .text {
  padding-bottom: 0;
}
.emoji {
  font-size: 55px;
  line-height: 0;
}
.emoji.small {
  font-size: 46px;
}
.meta {
  display: flex;
  align-items: center;
  gap: 10px;
  color: #8f9190;
  font-size: 37px;
  line-height: 44px;
  white-space: nowrap;
}
.out .meta {
  color: #89a69b;
}
.sender {
  display: flex;
  align-items: baseline;
  justify-content: space-between;
  height: 79px;
  padding: 12px 21px 0 17px;
  line-height: 56px;
}
.sender strong {
  color: #ff9775;
  font-size: 46px;
  font-weight: 500;
}
.sender span {
  color: #8f9190;
  font-size: 38px;
}
.quote {
  padding: 32px 28px 36px 40px;
  border-radius: 24px;
  background: linear-gradient(90deg, #71ec89 12px, #1d1f1e 12px);
}
.quote cite {
  display: block;
  margin-bottom: 10px;
  color: #71ec89;
  font-size: 42px;
  font-style: normal;
  font-weight: 600;
  line-height: 52px;
}
.quote p {
  color: #c9cac9;
  font-size: 38px;
  line-height: 52px;
}
.quote .emoji {
  opacity: 0.8;
}
.forward {
  display: grid;
  place-items: center;
  align-self: center;
  width: 96px;
  height: 96px;
  margin: 0 0 22px 25px;
  border-radius: 50%;
  background: #434446;
}
.next {
  width: 72%;
  height: 90px;
}
.day {
  position: absolute;
  top: 37px;
  left: 50%;
  padding: 0 30px;
  border-radius: 28px;
  background: rgba(29, 31, 30, 0.4);
  color: rgba(200, 203, 201, 0.4);
  font-size: 38px;
  font-weight: 500;
  line-height: 58px;
  transform: translateX(-50%);
}
.scrollbar {
  position: absolute;
  top: 58%;
  right: 9px;
  bottom: 105px;
  width: 9px;
  border-radius: 5px;
  background: rgba(155, 155, 155, 0.85);
}

/* wallet card */
.wallet {
  aspect-ratio: 857 / 1204;
  overflow: hidden;
  border-radius: 26px;
  background: #0c1116;
  color: #dfe3e8;
}
.wallet-top {
  display: flex;
  align-items: center;
  gap: 45px;
  height: 82px;
  padding: 0 50px 6px 31px;
}
.portfolio {
  display: flex;
  align-items: center;
  margin-right: auto;
  font-size: 31px;
  font-weight: 500;
}
.portfolio svg {
  margin-left: 22px;
}
.star {
  margin-right: 8px;
  font-size: 34px;
}
.tabs {
  display: flex;
  border-bottom: 2px solid #1e2733;
}
.tab {
  flex: 1;
  height: 89px;
  padding-top: 6px;
  border-bottom: 5px solid transparent;
  color: #8290a6;
  font-size: 23px;
  font-weight: 500;
}
.tab.active {
  border-color: #80cc3f;
  color: #f2f4f6;
  font-weight: 600;
}
.total {
  margin: 33px 32px 22px 31px;
  padding: 33px 34px 28px 33px;
  border: 4px solid #1e2836;
  border-radius: 14px;
}
.amount {
  display: flex;
  align-items: center;
  gap: 10px;
  margin-bottom: 5px;
  font-size: 37px;
  font-weight: 500;
  line-height: 46px;
}
.change {
  color: #8290a6;
  font-size: 19px;
  line-height: 34px;
}
.change .up {
  margin-right: 14px;
  font-size: 20px;
}
.up {
  color: #35c75a;
}
.fall {
  color: #f0402f;
}
.tri {
  display: inline-block;
  margin: 0 3px;
  border: 8px solid transparent;
  border-top: 0;
  border-bottom: 9px solid;
  vertical-align: 3px;
}
.tri.down {
  border-top: 9px solid;
  border-bottom: 0;
}
.filters {
  display: flex;
  gap: 18px;
  padding-left: 41px;
}
.chip {
  display: flex;
  align-items: center;
  gap: 9px;
  height: 58px;
  padding: 0 25px;
  border-radius: 12px;
  background: #212c3a;
  font-size: 23px;
  font-weight: 500;
}
.chip small {
  color: #75849b;
  font-size: 20px;
}
table {
  width: 100%;
  table-layout: fixed;
  border-spacing: 0;
}
th {
  height: 69px;
  padding: 8px 0 0;
  color: #8290a6;
  font-size: 18px;
  font-weight: 600;
}
td {
  height: 105px;
  padding: 0;
  border-top: 2px solid #1e2733;
  font-size: 23px;
  font-weight: 500;
  line-height: 28px;
}
.coin {
  width: 143px;
  padding-left: 30px;
  text-align: center;
}
.coin svg {
  margin: 0 auto;
}
.price,
.pct,
.hold {
  text-align: right;
  white-space: nowrap;
}
.price {
  width: 178px;
}
td.price {
  font-size: 21px;
}
.pct {
  width: 138px;
}
.pct .tri {
  margin-right: 6px;
}
.hold {
  width: 308px;
  line-height: 33px;
}
.hold span {
  display: block;
  color: #8290a6;
}
.sorted {
  color: #dfe3e8;
}
.sorted .tri {
  margin: 0 -13px 0 0;
}
.more button {
  display: block;
  width: 6px;
  height: 24px;
  margin-left: 33px;
  background: radial-gradient(circle, #8c9cb4 2px, transparent 3px) 0 0 / 6px 8px;
}

/* composer */
.compose {
  flex: none;
  height: 235px;
  padding-top: 22px;
  background: linear-gradient(90deg, #101010, #111614 35%, #111614 75%, #101212);
}
.compose-row {
  display: flex;
  align-items: center;
  padding: 0 50px 0 40px;
}
.field {
  position: relative;
  flex: 1;
  margin: 0 56px 0 41px;
}
.field input {
  display: block;
  width: 100%;
  height: 90px;
  padding: 0 110px 0 36px;
  border: 2px solid #3c3e3d;
  border-radius: 45px;
  background: linear-gradient(90deg, #282828, #292c2b 35%);
  color: inherit;
  font: 48px Inter, sans-serif;
}
.sticker {
  position: absolute;
  top: 17px;
  right: 34px;
}
.field + .icon {
  margin-right: 58px;
}
.home {
  width: 472px;
  height: 15px;
  margin: 84px auto 0;
  border-radius: 8px;
  background: #fff;
}
```
